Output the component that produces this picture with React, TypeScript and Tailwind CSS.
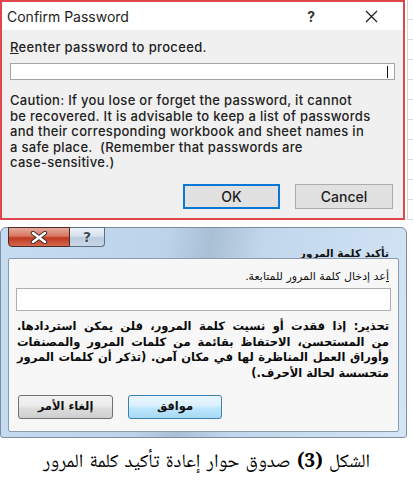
export default function App() {
  return (
    <div className="w-[413px] h-[490px] bg-white overflow-hidden flex flex-col">
      {/* English Office dialog */}
      <div className="flex h-[220px] shrink-0">
        <div className="w-[405px] h-full border-2 border-[#e0464b] flex flex-col font-['Inter','Liberation_Sans',sans-serif] text-[#1e1e1e]">
          <div className="h-[28px] bg-white flex items-center pl-[5px] shrink-0">
            <span className="text-[14px]">Confirm Password</span>
            <span className="ml-auto text-[14px] font-bold text-[#333]">?</span>
            <svg className="ml-[50px] mr-[25px]" width="13" height="13" viewBox="0 0 13 13">
              <path d="M1 1L12 12M12 1L1 12" stroke="#222" strokeWidth="1.3" />
            </svg>
          </div>
          <div className="flex-1 bg-[#f0f0f0] px-[8px] pt-[9px] flex flex-col">
            <div className="text-[13px] leading-[16px] font-medium tracking-[0.35px]">
              <span className="underline">R</span>eenter password to proceed.
            </div>
            <div className="mt-[8px] h-[17px] w-[385px] bg-white border border-[#a5a5a5] flex items-center justify-end pr-[6px]">
              <div className="w-[1px] h-[12px] bg-[#111]" />
            </div>
            <div className="mt-[13px] text-[13px] leading-[15.6px] font-medium tracking-[0.3px] text-[#222]">
              <div>Caution: If you lose or forget the password, it cannot</div>
              <div>be recovered. It is advisable to keep a list of passwords</div>
              <div>and their corresponding workbook and sheet names in</div>
              <div>a safe place.&nbsp; (Remember that passwords are</div>
              <div>case-sensitive.)</div>
            </div>
            <div className="mt-auto mb-[9px] flex justify-end gap-[15px] pr-[2px]">
              <div className="w-[97px] h-[25px] bg-[#e1e1e1] border-2 border-[#0a78d7] flex items-center justify-center text-[14px] font-medium">
                OK
              </div>
              <div className="w-[98px] h-[25px] bg-[#e1e1e1] border border-[#adadad] flex items-center justify-center text-[14px] font-medium">
                Cancel
              </div>
            </div>
          </div>
        </div>
        <div className="flex-1 h-full border-l border-[#d8d8d8] ml-[2px] bg-[repeating-linear-gradient(to_bottom,#ffffff_0px,#ffffff_19px,#dadada_19px,#dadada_20px)]" />
      </div>

      {/* Arabic Windows 7 dialog */}
      <div className="mt-[7px] w-[407px] h-[211px] shrink-0 rounded-t-[6px] rounded-b-[3px] border border-[#7e8ea0] bg-[linear-gradient(100deg,#c6dcf1_0%,#bcd3ea_38%,#a9bfd4_48%,#c2d7ec_60%,#d3e5f6_100%)] flex flex-col px-[7px] pb-[5px]">
        <div className="h-[30px] shrink-0 flex items-start">
          <div className="flex -mt-[1px]">
            <div className="w-[62px] h-[20px] rounded-bl-[4px] border border-[#4a2a24] bg-[linear-gradient(to_bottom,#e7aa9e_0%,#d7765f_45%,#c0391f_55%,#d46a4e_100%)] flex items-center justify-center">
              <svg width="18" height="13" viewBox="0 0 18 13">
                <path d="M3 2L15 11M15 2L3 11" stroke="#3b2a2a" strokeWidth="4.4" strokeLinecap="round" />
                <path d="M3 2L15 11M15 2L3 11" stroke="#ffffff" strokeWidth="2.6" strokeLinecap="round" />
              </svg>
            </div>
            <div className="w-[35px] h-[20px] rounded-br-[4px] border border-l-0 border-[#5e6f82] bg-[linear-gradient(to_bottom,#eaf1f8_0%,#d5e1ee_45%,#b9cbdd_55%,#c9d8e8_100%)] flex items-center justify-center">
              <span className="text-[14px] font-bold leading-none text-[#3f4a56] font-['DejaVu_Sans',sans-serif] [text-shadow:0_0_2px_#fff]">?</span>
            </div>
          </div>
          <div dir="rtl" className="ml-auto mt-[19px] mr-[10px] text-[10.5px] font-bold text-[#111] font-['DejaVu_Sans',sans-serif] leading-[13px]">
            تأكيد كلمة المرور
          </div>
        </div>
        <div dir="rtl" className="flex-1 bg-[#f7f7f7] border border-[#8b9cb0] rounded-[2px] px-[7px] pt-[10px] flex flex-col font-['DejaVu_Sans',sans-serif] text-[#111]">
          <div className="text-[11px] leading-[16px] pr-[2px]">
            <span className="underline">أ</span>عد إدخال كلمة المرور للمتابعة.
          </div>
          <div className="mt-[3px] h-[23px] w-[375px] bg-white border border-[#abadb3]" />
          <div className="mt-[8px] text-[11.5px] font-bold leading-[15.5px] pr-[2px] pl-[1px] text-[#0a0a0a]">
            <div className="[text-align-last:justify]">تحذير: إذا فقدت أو نسيت كلمة المرور، فلن يمكن استردادها.</div>
            <div className="[text-align-last:justify]">من المستحسن، الاحتفاظ بقائمة من كلمات المرور والمصنفات</div>
            <div className="[text-align-last:justify]">وأوراق العمل المناظرة لها في مكان آمن. (تذكر أن كلمات المرور</div>
            <div>متحسسة لحالة الأحرف.)</div>
          </div>
          <div className="mt-auto mb-[12px] flex justify-end gap-[15px] pl-[2px]">
            <div className="w-[94px] h-[24px] rounded-[3px] border border-[#3c7fb1] bg-[linear-gradient(to_bottom,#eaf6fd_0%,#d9f0fc_45%,#bee6fd_55%,#a7d9f5_100%)] flex items-center justify-center text-[11.5px] font-bold">
              موافق
            </div>
            <div className="w-[95px] h-[24px] rounded-[3px] border border-[#707070] bg-[linear-gradient(to_bottom,#f2f2f2_0%,#ebebeb_45%,#dddddd_55%,#cfcfcf_100%)] flex items-center justify-center text-[11.5px] font-bold">
              إلغاء الأمر
            </div>
          </div>
        </div>
      </div>

      {/* Caption */}
      <div dir="rtl" className="mt-[11px] text-center text-[19px] [word-spacing:2px] text-black font-['Noto_Naskh_Arabic','Liberation_Serif','DejaVu_Serif',serif]">
        الشكل <span className="font-bold">(3)</span> صدوق حوار إعادة تأكيد كلمة المرور
      </div>
    </div>
  );
}
